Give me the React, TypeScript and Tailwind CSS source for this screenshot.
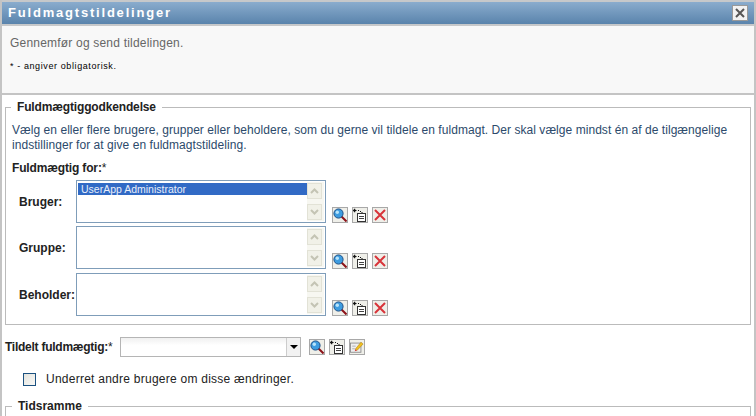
import { ReactNode } from 'react';

function IconBox({ children }: { children: ReactNode }) {
  return (
    <span className="flex h-[16px] w-[16px] items-center justify-center border border-[#a8a8a8] bg-[#efefe9]">
      {children}
    </span>
  );
}

function SearchIcon() {
  return (
    <IconBox>
      <svg width="14" height="14" viewBox="0 0 14 14">
        <line x1="8" y1="8" x2="13.5" y2="13.5" stroke="#8c1218" strokeWidth="2" />
        <circle cx="5.5" cy="5.5" r="4.6" fill="#3d9ce0" stroke="#1d4f86" strokeWidth="1" />
        <circle cx="4.3" cy="4.2" r="1.7" fill="#b8e4fa" />
      </svg>
    </IconBox>
  );
}

function HistoryIcon() {
  return (
    <IconBox>
      <svg width="14" height="14" viewBox="0 0 14 14">
        <path d="M0.5 2.5h3M2.2 0.8 0.5 2.5l1.7 1.7" fill="none" stroke="#111" strokeWidth="1.2" />
        <path d="M5 2.5h1M7 3.5h1M8.5 4.5h1" stroke="#111" strokeWidth="1" />
        <rect x="4.5" y="5.5" width="8" height="8" fill="#fff" stroke="#333" />
        <path d="M6 8.5h5M6 10.5h5" stroke="#444" strokeWidth="1" />
      </svg>
    </IconBox>
  );
}

function ClearIcon() {
  return (
    <IconBox>
      <svg width="12" height="12" viewBox="0 0 12 12">
        <path d="M1 1 11 11M11 1 1 11" stroke="#d8343a" strokeWidth="2" />
      </svg>
    </IconBox>
  );
}

function EditIcon() {
  return (
    <IconBox>
      <svg width="16" height="14" viewBox="0 0 16 14">
        <rect x="0.5" y="2.5" width="12" height="10.5" fill="#efefef" stroke="#8a8a8a" />
        <path d="M2.5 6h4M2.5 9h3" stroke="#aaa" />
        <path d="M6 9.5 12.5 1.5l2.5 2L8 11z" fill="#f0c020" stroke="#a87a10" strokeWidth="0.6" />
        <path d="M6 9.5 8 11l-2.5.8z" fill="#d8383c" />
      </svg>
    </IconBox>
  );
}

function Arrow({ up }: { up?: boolean }) {
  return (
    <span className="flex h-[16px] w-[15px] items-center justify-center border border-[#e2e2d6] bg-[#f1f1e8]">
      <svg width="9" height="6" viewBox="0 0 9 6">
        <path d={up ? 'M1 5l3.5-3.5L8 5' : 'M1 1l3.5 3.5L8 1'} fill="none" stroke="#c4c4b4" strokeWidth="2" />
      </svg>
    </span>
  );
}

function ListRow({ label, value, className }: { label: string; value?: string; className?: string }) {
  return (
    <div className={`flex items-start ${className ?? ''}`}>
      <div className="flex h-[43px] w-[64px] items-center pl-[7px] font-bold text-[#222]">{label}</div>
      <div className="flex h-[43px] w-[250px] border border-[#7f9db9] bg-white p-px">
        <div className="flex-1">
          {value && <div className="mt-px h-[12px] bg-[#316ac5] pl-[3px] text-[10.5px] leading-[12px] text-[#e8eefa]">{value}</div>}
        </div>
        <div className="flex w-[17px] flex-col justify-between bg-[#f7f7f1] py-px">
          <Arrow up />
          <Arrow />
        </div>
      </div>
      <div className="ml-[6px] mt-[27px] flex gap-[4px]">
        <SearchIcon />
        <HistoryIcon />
        <ClearIcon />
      </div>
    </div>
  );
}

export default function App() {
  return (
    <div className="h-[416px] w-[756px] overflow-hidden border-x-2 border-x-[#c4c4c4] bg-white font-['Liberation_Sans',Arial,sans-serif] text-[12px]">
      <div className="flex h-[26px] items-center justify-between border-y-2 border-[#c6c8ca] bg-gradient-to-b from-[#8aaccd] to-[#5a84ac] pl-[6px] pr-[6px]">
        <span className="text-[13px] font-bold tracking-[1.8px] text-white">Fuldmagtstildelinger</span>
        <span className="flex h-[16px] w-[16px] items-center justify-center border border-[#999] bg-[#f2f2f2]">
          <svg width="10" height="10" viewBox="0 0 10 10">
            <path d="M1 1l8 8M9 1l-8 8" stroke="#555" strokeWidth="2" />
          </svg>
        </span>
      </div>

      <div className="h-[69px] border-b-2 border-[#c4c4c4] bg-[#f8f8f8] pl-[8px] pt-[10px]">
        <div className="leading-[15px] tracking-[0.2px] text-[#666]">Gennemfør og send tildelingen.</div>
        <div className="mt-[9px] text-[9px] leading-[12px] tracking-[0.6px] text-black">* - angiver obligatorisk.</div>
      </div>

      <fieldset className="ml-[3px] mr-[3px] mt-[5px] h-[225px] border border-[#bbb] px-[6px]">
        <legend className="-ml-[1px] px-[6px] text-[12px] font-bold leading-[14px] tracking-[-0.15px] text-[#222]">Fuldmægtiggodkendelse</legend>
        <p className="mt-[9px] leading-[15px] tracking-[0.05px] text-[#2c4a6b]">
          Vælg en eller flere brugere, grupper eller beholdere, som du gerne vil tildele en fuldmagt. Der skal vælge mindst én af de tilgængelige indstillinger for at give en fuldmagtstildeling.
        </p>
        <div className="mb-[4px] mt-[8px] h-[15px] font-bold leading-[15px] tracking-[-0.15px] text-[#222]">
          Fuldmægtig for:<span className="font-normal">*</span>
        </div>
        <div className="flex flex-col gap-[3px]">
          <ListRow label="Bruger:" value="UserApp Administrator" />
          <ListRow label="Gruppe:" />
          <ListRow label="Beholder:" className="mt-[1px]" />
        </div>
      </fieldset>

      <div className="ml-[3px] mt-[12px] flex items-center">
        <span className="w-[115px] font-bold tracking-[-0.25px] text-[#222]">
          Tildelt fuldmægtig:<span className="font-normal">*</span>
        </span>
        <div className="flex h-[20px] w-[181px] border border-[#b5b5b5] bg-gradient-to-b from-[#f0f0f0] to-white to-40%">
          <div className="flex-1 border-r border-[#ccc]" />
          <div className="flex w-[13px] items-center justify-center bg-[#f2f2f2]">
            <span className="border-x-[4px] border-t-[4px] border-x-transparent border-t-black" />
          </div>
        </div>
        <div className="ml-[8px] flex gap-[4px]">
          <SearchIcon />
          <HistoryIcon />
          <EditIcon />
        </div>
      </div>

      <div className="ml-[21px] mt-[13px] flex items-center gap-[10px]">
        <span className="h-[13px] w-[13px] border border-[#1c5180] bg-gradient-to-br from-[#e4e4de] to-[#f8f8f6]" />
        <span className="tracking-[0.25px] text-[#222]">Underret andre brugere om disse ændringer.</span>
      </div>

      <fieldset className="ml-[3px] mr-[3px] mt-[11px] h-[40px] border border-[#bbb]">
        <legend className="ml-[6px] px-[6px] text-[12px] font-bold leading-[14px] text-[#222]">Tidsramme</legend>
      </fieldset>
    </div>
  );
}
